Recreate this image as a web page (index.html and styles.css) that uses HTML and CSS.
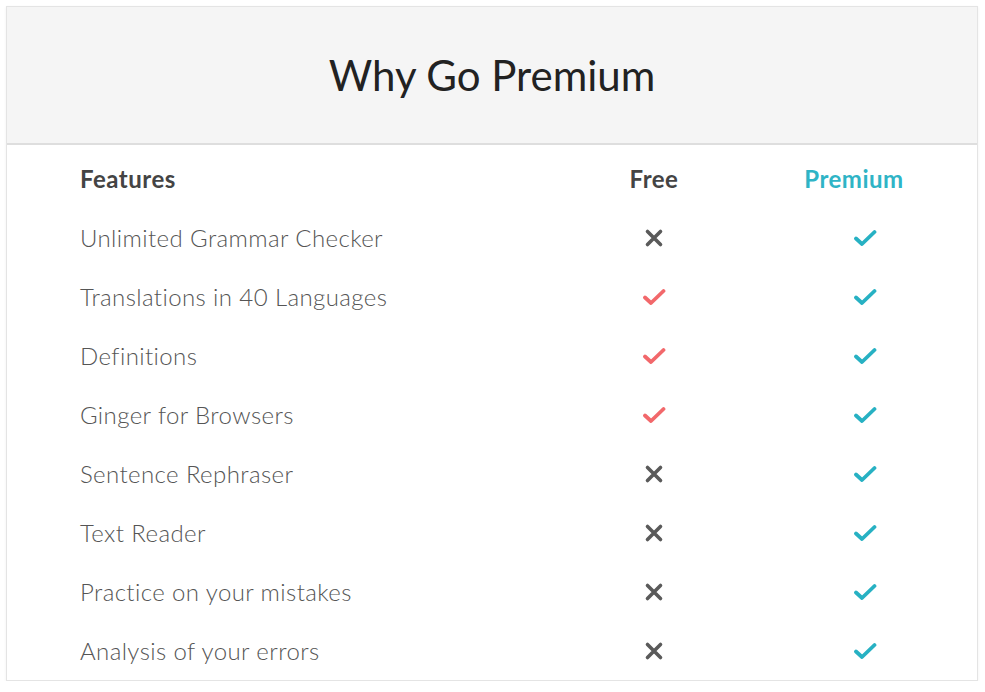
FILE: index.html
```html
<!DOCTYPE html>
<html lang="en">
<head>
<meta charset="utf-8">
<title>Why Go Premium</title>
<link rel="stylesheet" href="styles.css">
</head>
<body>
<svg width="0" height="0" class="defs" aria-hidden="true">
  <defs>
    <symbol id="i-x" viewBox="0 0 20 20"><path d="M3.5 3.5 L16.5 16.5 M16.5 3.5 L3.5 16.5" fill="none" stroke="currentColor" stroke-width="3.6" stroke-linecap="round"/></symbol>
    <symbol id="i-check" viewBox="0 0 24 18"><path d="M3 9.5 L9 15 L21.5 3" fill="none" stroke="currentColor" stroke-width="3.8" stroke-linecap="round" stroke-linejoin="round"/></symbol>
  </defs>
</svg>
<div class="card">
  <div class="card-head"><h1 class="title">Why Go Premium</h1></div>
  <div class="table">
    <div class="cell th feat">Features</div>
    <div class="cell th free">Free</div>
    <div class="cell th prem">Premium</div>

    <div class="cell feat">Unlimited Grammar Checker</div>
    <div class="cell free"><svg class="ic no"><use href="#i-x"/></svg></div>
    <div class="cell prem"><svg class="ic yes-p"><use href="#i-check"/></svg></div>

    <div class="cell feat">Translations in 40 Languages</div>
    <div class="cell free"><svg class="ic yes-f"><use href="#i-check"/></svg></div>
    <div class="cell prem"><svg class="ic yes-p"><use href="#i-check"/></svg></div>

    <div class="cell feat">Definitions</div>
    <div class="cell free"><svg class="ic yes-f"><use href="#i-check"/></svg></div>
    <div class="cell prem"><svg class="ic yes-p"><use href="#i-check"/></svg></div>

    <div class="cell feat">Ginger for Browsers</div>
    <div class="cell free"><svg class="ic yes-f"><use href="#i-check"/></svg></div>
    <div class="cell prem"><svg class="ic yes-p"><use href="#i-check"/></svg></div>

    <div class="cell feat">Sentence Rephraser</div>
    <div class="cell free"><svg class="ic no"><use href="#i-x"/></svg></div>
    <div class="cell prem"><svg class="ic yes-p"><use href="#i-check"/></svg></div>

    <div class="cell feat">Text Reader</div>
    <div class="cell free"><svg class="ic no"><use href="#i-x"/></svg></div>
    <div class="cell prem"><svg class="ic yes-p"><use href="#i-check"/></svg></div>

    <div class="cell feat">Practice on your mistakes</div>
    <div class="cell free"><svg class="ic no"><use href="#i-x"/></svg></div>
    <div class="cell prem"><svg class="ic yes-p"><use href="#i-check"/></svg></div>

    <div class="cell feat">Analysis of your errors</div>
    <div class="cell free"><svg class="ic no"><use href="#i-x"/></svg></div>
    <div class="cell prem"><svg class="ic yes-p"><use href="#i-check"/></svg></div>
  </div>
</div>
</body>
</html>
```

FILE: styles.css
```css
* { box-sizing: border-box; }
html, body { margin: 0; padding: 0; background: #fff; }
body { font-family: Lato, "Open Sans", Arial, sans-serif; }
.defs { position: absolute; width: 0; height: 0; overflow: hidden; }

.card {
  margin: 6px 0 0 6px;
  width: 972px;
  border: 1px solid #e4e4e4;
  box-shadow: 0 1px 3px rgba(0,0,0,0.06);
  background: #fff;
}
.card-head {
  height: 138px;
  background: #f5f5f5;
  border-bottom: 2px solid #dedede;
  display: flex;
  align-items: center;
  justify-content: center;
}
.title {
  margin: 0;
  font-weight: 400;
  font-size: 42px;
  color: #222;
  letter-spacing: 0;
}
.table {
  display: grid;
  grid-template-columns: 1fr 140px 200px;
  grid-auto-rows: 59px;
  padding: 4px 53px 0 73px;
}
.cell {
  display: flex;
  align-items: center;
  font-size: 24px;
  letter-spacing: 0.4px;
  font-weight: 300;
  color: #555;
}
.th { font-weight: 700; color: #444; letter-spacing: 0.5px; }
.th.prem { color: #2fb4c6; }
.free { justify-content: center; }
.prem { justify-content: center; padding-left: 60px; }
.ic { display: block; }
.no { width: 20px; height: 20px; color: #5a5a5a; }
.yes-f, .yes-p { width: 24px; height: 18px; }
.yes-f { color: #f2686b; }
.yes-p { color: #27b1c3; margin-left: 22px; }
```
